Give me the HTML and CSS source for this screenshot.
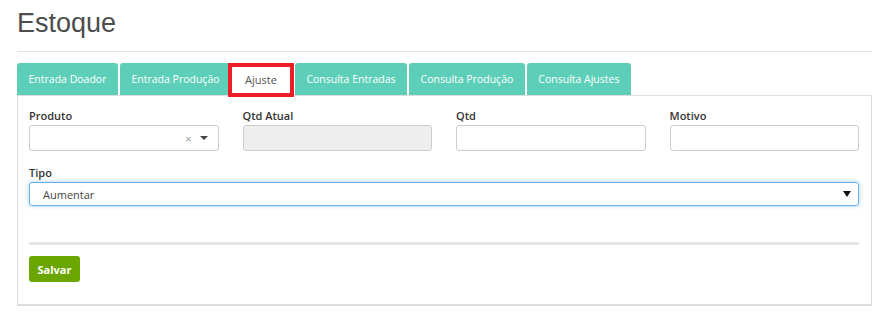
FILE: index.html
```html
<!DOCTYPE html>
<html lang="pt">
<head>
  <meta charset="UTF-8" />
  <meta name="viewport" content="width=device-width,initial-scale=1.0" />
  <title>Estoque</title>
  <link rel="stylesheet" href="styles.css">
</head>
<body>
  <main class="page">
    <h1 class="page-title">Estoque</h1>
    <hr class="page-rule">
    <ul class="tabs" role="tablist">
      <li class="tab">Entrada Doador</li>
      <li class="tab">Entrada Produção</li>
      <li class="tab active">Ajuste</li>
      <li class="tab">Consulta Entradas</li>
      <li class="tab">Consulta Produção</li>
      <li class="tab">Consulta Ajustes</li>
    </ul>
    <section class="panel">
      <form class="form">
        <div class="row">
          <div class="field">
            <label>Produto</label>
            <div class="combo">
              <span class="combo-clear">&times;</span>
              <span class="combo-arrow"></span>
            </div>
          </div>
          <div class="field">
            <label>Qtd Atual</label>
            <input class="input" type="text" disabled>
          </div>
          <div class="field">
            <label>Qtd</label>
            <input class="input" type="text">
          </div>
          <div class="field">
            <label>Motivo</label>
            <input class="input" type="text">
          </div>
        </div>
        <div class="field wide">
          <label>Tipo</label>
          <div class="select focus">
            <span>Aumentar</span>
            <span class="select-arrow"></span>
          </div>
        </div>
        <div class="divider"></div>
        <button type="button" class="btn-save">Salvar</button>
      </form>
    </section>
  </main>
</body>
</html>
```

FILE: styles.css
```css
body {
  margin: 0;
  background: #ffffff;
  font-family: "Open Sans", "Noto Sans", sans-serif;
  color: #333;
}
.page { padding: 8px 13px 0 17px; }
.page-title {
  margin: 0;
  font-family: "Liberation Sans", Arial, sans-serif;
  font-weight: normal;
  font-size: 27px;
  line-height: 30px;
  color: #4d4d4d;
}
.page-rule {
  margin: 13px 0 0;
  border: 0;
  border-top: 1px solid #e3e3e3;
}

/* Tabs */
.tabs {
  display: flex;
  gap: 2px;
  margin: 11px 0 0;
  padding: 0;
  list-style: none;
  height: 32px;
  position: relative;
  z-index: 1;
}
.tab {
  background: #5dcfb8;
  color: #ffffff;
  font-size: 10.5px;
  line-height: 32px;
  padding: 0 11.5px;
  border-radius: 3px 3px 0 0;
  white-space: nowrap;
}
.tab.active {
  background: #ffffff;
  color: #555;
  font-size: 11px;
  border: 4px solid #ee1c25;
  border-radius: 0;
  line-height: 26px;
  height: 26px;
  padding: 0 13px;
  margin: 0 -1px 0 -5px;
}

/* Panel */
.panel {
  border: 1px solid #dddddd;
  border-bottom-width: 2px;
  padding: 11px 12px 22px 11px;
}
.row {
  display: grid;
  grid-template-columns: repeat(4, 1fr);
  gap: 24px;
}
.field label {
  display: block;
  font-size: 11px;
  font-weight: 600;
  line-height: 17px;
  margin-bottom: 1px;
  color: #333;
}
.input, .combo {
  display: block;
  box-sizing: border-box;
  width: 100%;
  height: 26px;
  margin: 0;
  border: 1px solid #cccccc;
  border-radius: 3px;
  background: #ffffff;
  font: inherit;
}
.input:disabled { background: #eeeeee; }
.combo {
  display: flex;
  align-items: center;
  justify-content: flex-end;
  gap: 8px;
  padding-right: 10px;
}
.combo-clear { font-size: 11px; color: #999; line-height: 1; }
.combo-arrow, .select-arrow {
  width: 0;
  height: 0;
  border-left: 4px solid transparent;
  border-right: 4px solid transparent;
  border-top: 4px solid #444;
}
.wide { margin-top: 13px; }
.select {
  display: flex;
  align-items: center;
  justify-content: space-between;
  box-sizing: border-box;
  height: 24px;
  padding: 0 7px 0 13px;
  border: 1px solid #66afe9;
  border-radius: 3px;
  box-shadow: 0 0 4px rgba(102, 175, 233, 0.6);
  font-size: 11px;
  color: #444;
}
.select-arrow {
  border-top: 6px solid #111;
}
.divider {
  height: 3px;
  background: #e5e5e5;
  margin: 36px 0 11px;
}
.btn-save {
  display: block;
  height: 26px;
  width: 51px;
  padding: 0;
  border: 0;
  border-radius: 3px;
  background: #6ba500;
  color: #ffffff;
  font-family: inherit;
  font-size: 11px;
  font-weight: 700;
  cursor: pointer;
}
```
